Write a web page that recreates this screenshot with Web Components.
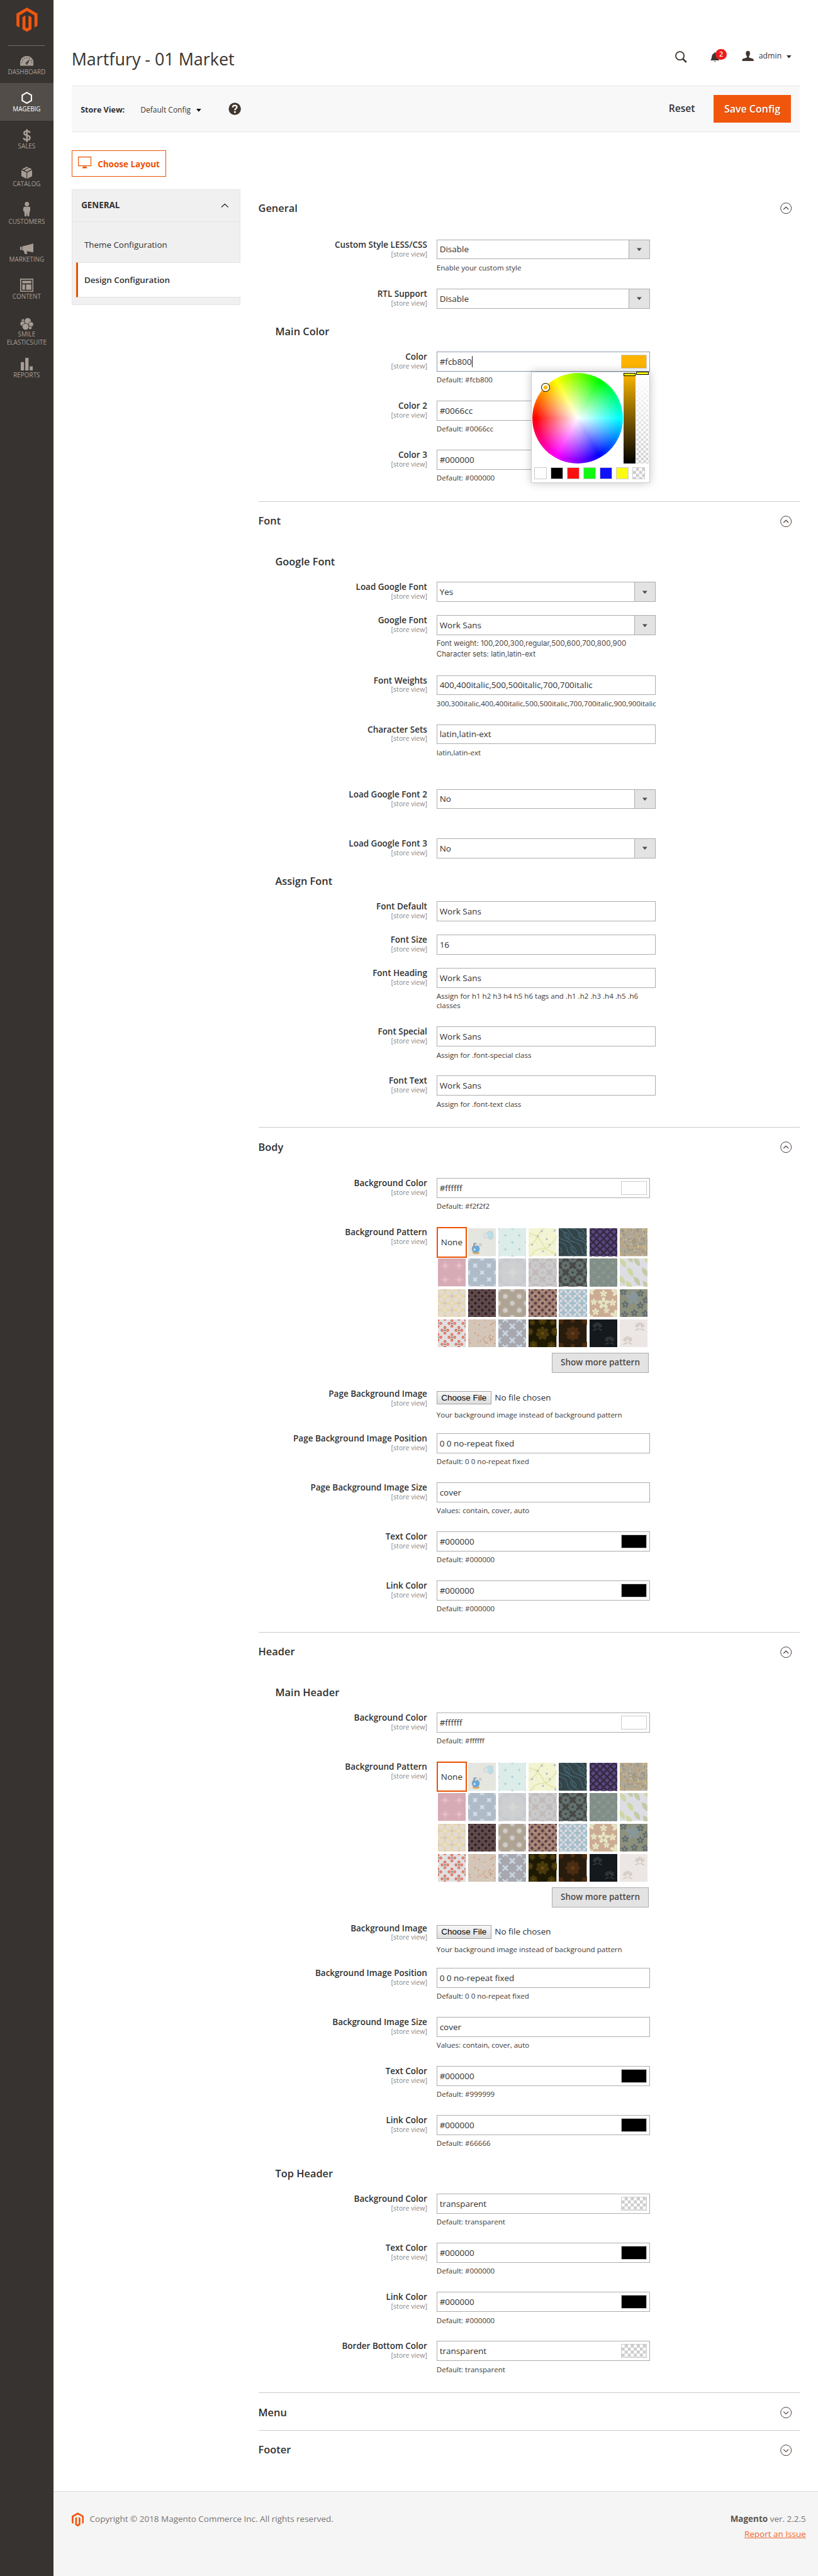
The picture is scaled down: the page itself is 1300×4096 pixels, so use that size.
<!DOCTYPE html>
<html lang="en">
<head>
<meta charset="utf-8">
<title>Martfury - 01 Market</title>
<style>
html{background:#fff}
body{margin:0;zoom:.96368;font-family:"Open Sans","Noto Sans",sans-serif;color:#303030;overflow:hidden}
</style>
</head>
<body>
<mb-admin></mb-admin>
<script>
const define = (name, css, html) => customElements.define(name, class extends HTMLElement {
  constructor() { super(); this.attachShadow({ mode: 'open' }); }
  connectedCallback() {
    const a = n => this.getAttribute(n) || '';
    this.shadowRoot.innerHTML = `<style>*{box-sizing:border-box}${css}</style>` + (typeof html === 'function' ? html(a) : html);
  }
});

/* ---------- icons ---------- */
const ICONS = {
  magento: '<svg viewBox="1.6 0 20.8 24"><path d="M12 24l-4.455-2.572v-12l2.97-1.715v12.001l1.485.902 1.485-.902V7.713l2.971 1.715v12L12 24zM22.391 6v12l-2.969 1.714V7.713L12 3.43 4.574 7.713v12.001L1.609 18V6L12 0l10.391 6z"/></svg>',
  dashboard: '<svg viewBox="0 0 22 16"><path d="M0 16V11A11 11 0 0 1 22 11V16Z"/><g fill="#373330"><circle cx="3" cy="11" r=".8"/><circle cx="4.2" cy="7" r=".8"/><circle cx="7" cy="4" r=".8"/><circle cx="11" cy="2.8" r=".8"/><circle cx="15" cy="4" r=".8"/><circle cx="18.6" cy="7.4" r=".8"/><circle cx="19.3" cy="11" r=".8"/><path d="M16 5.5L12.8 12.6A2 2 0 1 1 9.6 10.6Z"/></g><circle cx="11" cy="12" r=".8"/></svg>',
  magebig: '<svg viewBox="0 0 20 22"><path d="M10 2.2L17.6 6.5V15.5L10 19.8L2.4 15.5V6.5Z" fill="none" stroke="currentColor" stroke-width="2.2"/></svg>',
  sales: '<svg viewBox="0 0 14 22"><path d="M12 6.2C11.6 4.2 9.8 3.6 7 3.6C4 3.6 2.4 4.8 2.4 7C2.4 12 12 9.4 12 14.6C12 17 10 18.2 7 18.2C3.8 18.2 1.8 17 1.6 14.6M7 .5V21.5" fill="none" stroke="currentColor" stroke-width="2.7"/></svg>',
  catalog: '<svg viewBox="0 0 18 20"><path d="M0 5.6L8.4 9.6V20L0 15.6ZM18 5.6L9.6 9.6V20L18 15.6ZM9 0L11.6 1.2L3.4 5.4L.9 4.2ZM13 1.9L17.1 4.2L9 8.3L4.9 6.2Z"/></svg>',
  customers: '<svg viewBox="0 0 12 24"><circle cx="6" cy="3.6" r="3.6"/><path d="M2.4 8H9.6Q12 8 12 11V15.6H10.4L9.6 24H6.8L6 18L5.2 24H2.4L1.6 15.6H0V11Q0 8 2.4 8Z"/></svg>',
  marketing: '<svg viewBox="0 0 22 18"><path d="M0 5.5H2.6V11H0ZM3.6 5L22 .3V14.8L11 12.6L11.6 18H8L5.8 11.6H3.6Z"/></svg>',
  content: '<svg viewBox="0 0 22 22"><path fill-rule="evenodd" d="M0 0H22V22H0ZM1.8 1.8V20.2H20.2V1.8ZM3.6 3.6H18.4V7.8H3.6ZM3.6 9.6H8V18.4H3.6ZM9.8 9.6H18.4V18.4H9.8Z"/></svg>',
  smile: '<svg viewBox="0 0 22 20"><g stroke="#373330" stroke-width=".8"><circle cx="12.6" cy="5.2" r="5.4"/><circle cx="4.6" cy="4.2" r="2.6"/><circle cx="4" cy="9.4" r="4.1"/><circle cx="18" cy="10.6" r="4.1"/><circle cx="16.6" cy="16.4" r="2.7"/><circle cx="9" cy="14.6" r="5.4"/></g></svg>',
  reports: '<svg viewBox="0 0 20 21"><path d="M0 7H5.4V21H0ZM7.4 0H12.8V21H7.4ZM14.8 14H20V21H14.8Z"/></svg>',
  search: '<svg viewBox="0 0 21 21"><circle cx="8.8" cy="8.4" r="7.2" fill="none" stroke="currentColor" stroke-width="2"/><path d="M13.8 13.6L20 19.6" stroke="currentColor" stroke-width="2.8"/></svg>',
  bell: '<svg viewBox="0 0 16 18"><path d="M0 14.4C2.4 12 2 9 2.8 6C3.4 3.4 5 2.2 6.6 1.8V.6H9.4V1.8C11 2.2 12.6 3.4 13.2 6C14 9 13.6 12 16 14.4ZM6.4 15.8H9.6Q8 18.4 6.4 15.8Z"/></svg>',
  user: '<svg viewBox="0 0 20 18"><path d="M10 0C13 0 13.8 2 13.6 4.8C13.5 7 12.6 8.6 11.8 9.6V11.4C14 12.8 19.4 13 20 15.4V18H0V15.4C.6 13 6 12.8 8.2 11.4V9.6C7.4 8.6 6.5 7 6.4 4.8C6.2 2 7 0 10 0Z"/></svg>',
  monitor: '<svg viewBox="0 0 22 20"><path d="M.7 .7H21.3V15.2H.7Z" fill="none" stroke="currentColor" stroke-width="1.2"/><path d="M8.2 16.4H13.8V18H15V19.3H7V18H8.2Z"/></svg>',
  help: '<svg viewBox="0 0 22 22"><circle cx="11" cy="11" r="10.6"/><path d="M7.4 8.4C7.6 3.8 14.6 4 14.6 8C14.6 10.6 11.2 10.4 11.2 13.2" fill="none" stroke="#fff" stroke-width="2.6"/><circle cx="11.2" cy="16.6" r="1.6" fill="#fff"/></svg>',
  caret: '<svg viewBox="0 0 14 8"><path d="M1 7L7 1.4L13 7" fill="none" stroke="currentColor" stroke-width="1.5"/></svg>',
  up: '<svg viewBox="0 0 19 19"><circle cx="9.5" cy="9.5" r="8.8" fill="none" stroke="currentColor"/><path d="M5.4 11.4L9.5 7.4L13.6 11.4" fill="none" stroke="currentColor" stroke-width="1.2"/></svg>',
  down: '<svg viewBox="0 0 19 19"><circle cx="9.5" cy="9.5" r="8.8" fill="none" stroke="currentColor"/><path d="M5.4 8L9.5 12L13.6 8" fill="none" stroke="currentColor" stroke-width="1.2"/></svg>',
  tri: '<svg viewBox="0 0 8 5"><path d="M0 0H8L4 5Z"/></svg>'
};
define('mb-icon', ':host{display:block;flex:none}svg{display:block;width:100%;height:100%;fill:currentColor}', a => ICONS[a('name')]);

/* ---------- sidebar ---------- */
define('mb-nav-item', `
:host{display:flex;flex-direction:column;align-items:center;height:62px;color:#a79d95;flex:none}
:host([active]){background:#524d49;color:#fff}
:host([tall]){height:67.5px}
.i{height:36px;padding-top:4px;display:flex;align-items:center}
span{font-size:10.3px;line-height:13px;text-align:center;text-transform:uppercase}`,
a => `<div class="i"><mb-icon name="${a('icon')}" style="width:${a('w')}px;height:${a('h')}px;margin-top:${a('dy') || 6}px"></mb-icon></div><span><slot></slot></span>`);

define('mb-sidebar', `
:host{display:flex;flex-direction:column;width:88px;background:#373330;flex:none}
.logo{height:75px;padding:12.5px 0 0 27px;color:#f1570f}
hr{width:60px;height:1px;border:0;background:#736963;margin:0 auto;flex:none}
nav{display:flex;flex-direction:column}`, `
<div class="logo"><mb-icon name="magento" style="width:35px;height:40px"></mb-icon></div><hr>
<nav>
<mb-nav-item icon="dashboard" w="22" h="16" dy="9" style="height:61px">Dashboard</mb-nav-item>
<mb-nav-item icon="magebig" w="20" h="22" dy="8" active>Magebig</mb-nav-item>
<mb-nav-item icon="sales" w="14" h="22" dy="9">Sales</mb-nav-item>
<mb-nav-item icon="catalog" w="18" h="20" dy="9">Catalog</mb-nav-item>
<mb-nav-item icon="customers" w="12" h="24" dy="4">Customers</mb-nav-item>
<mb-nav-item icon="marketing" w="22" h="18" dy="11">Marketing</mb-nav-item>
<mb-nav-item icon="content" w="22" h="22" dy="7">Content</mb-nav-item>
<mb-nav-item icon="smile" w="22" h="21" dy="11" tall>Smile<br>Elasticsuite</mb-nav-item>
<mb-nav-item icon="reports" w="20" h="21" dy="9">Reports</mb-nav-item>
</nav>`);

/* ---------- header ---------- */
define('mb-header', `
:host{display:flex;height:141px;padding:0 44px 0 30px;align-items:flex-start;color:#41362f}
h1{margin:78px auto 0 0;font-weight:400;font-size:27.9px;line-height:40px;color:#373330}
.s{margin:84px 38px 0 0}.b{position:relative;margin:86px 37px 0 0}
.n{position:absolute;left:9px;top:-5px;width:18px;height:18px;border-radius:50%;background:#eb1c1c;color:#fff;font-size:11px;font-weight:600;line-height:18px;text-align:center}
.u{display:flex;align-items:center;margin-top:83px;font-size:12.8px;line-height:19px;gap:8px}`, `
<h1>Martfury - 01 Market</h1>
<mb-icon class="s" name="search" style="width:21px;height:20px"></mb-icon>
<div class="b"><mb-icon name="bell" style="width:15px;height:17px"></mb-icon><span class="n">2</span></div>
<div class="u"><mb-icon name="user" style="width:20px;height:17px"></mb-icon><span>admin</span><mb-icon name="tri" style="width:8px;height:5px;color:#303030;margin-top:3px"></mb-icon></div>`);

define('mb-toolbar', `
:host{display:flex;align-items:center;height:77px;margin:0 30px;padding:0 15px;background:#f8f8f8;border:solid #e3e3e3;border-width:1px 0;color:#303030}
b{font-size:13px;font-weight:700;line-height:20px;margin:4px 26px 0 0}
.d{font-size:12.5px;line-height:20px;color:#41362f;margin:4px 9px 0 0}
.h{width:21px;height:21px;margin:0 auto 0 45px;color:#41362f}
.r{font-size:16.2px;font-weight:600;line-height:22px;margin-right:31px;margin-top:-1px}
button{all:unset;box-sizing:border-box;width:127px;height:45px;background:#f1570c;color:#fff;font:600 16.6px/44px "Open Sans",sans-serif;text-align:center;text-shadow:1px 1px 0 rgba(0,0,0,.25)}`, `
<b>Store View:</b><span class="d">Default Config</span><mb-icon name="tri" style="width:8px;height:5px;color:#000;margin-top:5px"></mb-icon>
<mb-icon class="h" name="help"></mb-icon><span class="r">Reset</span><button>Save Config</button>`);

define('mb-layout-button', `
:host{display:flex;align-items:center;width:156px;height:44px;border:1px solid #eb5202;color:#eb5202;padding:0 10px;font-size:14px;font-weight:700;line-height:20px}
mb-icon{width:22px;height:20px;margin:-3px 10px 0 0}span{margin-top:4px;white-space:nowrap}`,
`<mb-icon name="monitor"></mb-icon><span><slot></slot></span>`);

define('mb-config-nav', `
:host{display:block;width:278px;height:191px;background:#f0f0f0;border:1px solid #e3e3e3;font-size:13.9px;line-height:20px}
.h{display:flex;justify-content:space-between;align-items:center;height:53px;border-bottom:1px solid #e3e3e3;padding:0 18px 0 15px;font-weight:700}
.l{height:67px;padding:28px 0 0 20px}
.a{height:58px;padding:18px 0 0 10px;margin:0 -1px 0 7px;background:#fff;border:solid #e3e3e3;border-width:1px 0;border-left:3.2px solid #eb5202;font-weight:600}`, `
<div class="h"><span>GENERAL</span><mb-icon name="caret" style="width:13px;height:8px"></mb-icon></div>
<div class="l">Theme Configuration</div><div class="a">Design Configuration</div>`);

/* ---------- form ---------- */
define('mb-section', `
:host{display:block;border-top:1px solid #ccc;padding-bottom:4px}
:host([first]){border-color:transparent}
:host([closed]){height:62px;padding:0}
.h{display:flex;justify-content:space-between;height:83px;padding:21px 13.5px 0 0;font-size:17px;font-weight:600;line-height:20px}
mb-icon{width:19px;height:19px;margin-top:1.5px;color:#41362f}`,
a => `<div class="h"><span>${a('label')}</span><mb-icon name="${a('icon') || 'up'}"></mb-icon></div><slot></slot>`);

define('mb-subhead', ':host{display:block;height:49px;padding:5.5px 0 0 28px;font-size:17px;font-weight:600;line-height:20px}', '<slot></slot>');

const CHECK = 'background:conic-gradient(#ccc 25%,#fff 0 50%,#ccc 0 75%,#fff 0) 0 0/10px 10px';
define('mb-field', `
:host{display:flex;align-items:flex-start;--w:351.5px}
:host([wide]){--w:361px}
.l{width:278.5px;text-align:right;margin-right:15.5px;font-size:14px;font-weight:600;line-height:18px;padding-top:0;white-space:nowrap;flex:none}
.l small{display:block;font-size:11px;font-weight:400;line-height:14px;color:#8c8783;margin-top:-.5px}
.c{width:var(--w);flex:none}
.n{font-size:12px;line-height:16px;padding-top:5.5px;color:#41362f}
.n.w{font-family:Inter,sans-serif;line-height:17px;color:#514943}`,
a => `<div class="l">${a('label')}<small>[store view]</small></div>
<div class="c"><slot></slot>${a('note') ? `<div class="n ${a('nf')}">${a('note')}</div>` : ''}</div>`);

define('mb-input', `
:host{display:flex;align-items:center;height:33px;border:1px solid #adadad;padding:0 4px;font-size:14px;line-height:20px;background:#fff}
:host([focus]){border-color:#8a9bb0}
.cur{width:1px;height:19px;background:#222}
span{margin-top:1px}
i{width:42px;height:23px;border:1px solid #ccc;margin-left:auto}`,
a => `<span>${a('value')}</span>${a('focus') ? '<div class="cur"></div>' : ''}${a('color') ? `<i style="${a('color') === 'check' ? CHECK : 'background:' + a('color')}"></i>` : ''}`);

define('mb-select', `
:host{display:flex;height:33px;border:1px solid #adadad;font-size:14px;line-height:20px;background:#fff}
span{flex:1;padding:6px 4px}
div{width:34px;background:#e3e3e3;border-left:1px solid #adadad;display:flex;align-items:center;justify-content:center;color:#514943}
mb-icon{width:8px;height:6px;margin-top:1px}`,
a => `<span>${a('value')}</span><div><mb-icon name="tri"></mb-icon></div>`);

define('mb-file', `
:host{display:flex;align-items:center;height:30px;gap:6px;font-size:14px;line-height:20px}
button{all:unset;box-sizing:border-box;width:90px;height:22px;border:1px solid #a3a3a3;background:linear-gradient(#f8f8f8,#ddd);color:#000;text-align:center;font:14px/20px "Liberation Sans",sans-serif}`,
`<button>Choose File</button><span>No file chosen</span>`);

/* ---------- background pattern swatches ---------- */
const cir = (x, y, r, c) => `<circle cx="${x}" cy="${y}" r="${r}" fill="${c}"/>`;
const ell = (x, y, a, b, c, t = 0) => `<ellipse cx="${x}" cy="${y}" rx="${a}" ry="${b}" fill="${c}" transform="rotate(${t} ${x} ${y})"/>`;
const star = (x, y, r, c) => { let d = ''; for (let i = 0; i < 16; i++) { const q = i * Math.PI / 8, k = i % 2 ? r * .3 : i % 4 ? r * .58 : r; d += `${(x + Math.sin(q) * k).toFixed(1)},${(y - Math.cos(q) * k).toFixed(1)} `; } return `<polygon points="${d}" fill="${c}"/>`; };
const flower = (x, y, r, c, m, n = 6) => { let s = ''; for (let i = 0; i < n; i++) s += ell(x, +(y - r * .6).toFixed(1), r * .3, r * .42, c, 0).replace(/rotate\([^)]*\)/, `rotate(${i * 360 / n} ${x} ${y})`); return s + cir(x, y, r * .22, m); };
/* thin sprig: leaves fanning upward over a small bud */
const sprig = (x, y, c) => [-75, -50, -25, 0, 25, 50, 75].map((t, i) => `<ellipse cx="${x}" cy="${y - 6}" rx="1" ry="${i % 2 ? 3.2 : 2.4}" fill="${c}" transform="rotate(${t} ${x} ${y})"/>`).join('') + `<circle cx="${x}" cy="${y}" r="3.2" fill="none" stroke="${c}" stroke-width="1.3" stroke-dasharray="1.5 .8"/>` + ell(x - 5, y + 4, 3, .9, c, -25) + ell(x + 5, y + 4, 3, .9, c, 25);
const lattice = (p, fn, ox = 0, oy = 0) => { let s = ''; for (let j = -1; j * p / 2 <= 52; j++) for (let i = -1; i * p <= 58; i++) s += fn(ox + i * p + (j % 2 ? p / 2 : 0), oy + j * p / 2); return s; };
let seed = 7; const rnd = () => (seed = (seed * 16807) % 2147483647) / 2147483647;
const scatter = (n, fn) => { let s = ''; for (let i = 0; i < n; i++) s += fn(+(rnd() * 46).toFixed(1), +(rnd() * 46).toFixed(1), Math.round(rnd() * 180)); return s; };
const TILES = [
  ['#e5e6e1', scatter(190, (x, y, t) => cir(x, y, .55, t > 90 ? '#f2efc4' : '#d9dfe2')) + cir(29.5, 12, 4.6, '#c5cad2') + cir(36, 9.5, 5.2, '#bcc7d2') + cir(37, 14, 4.4, '#b9c6d2') + cir(29.5, 12, 3.8, '#dee2e2') + cir(36, 9.5, 4.2, '#b9dfe6') + cir(37, 14, 3.4, '#b9dfe6') + ell(13, 40.5, 6, 2.4, '#dfae68') + cir(12.5, 34, 6.6, '#8a9fb8') + cir(13, 34.5, 5.2, '#64aade') + cir(11.5, 27, 3.2, '#98a0ac') + cir(13, 27.4, 1.8, '#cfe0ea') + cir(20, 27, 2.6, '#c9ccd0') + cir(10.5, 35, 1.7, '#d7eaf5')],
  ['#dcece9', lattice(23, (x, y) => star(x, y, 3.3, '#a4c9d7'), 0, .2)],
  ['#f3f4d4', '<path d="M-4 30Q10 26 16 12T38 -6M2 50Q8 34 22 34T50 8M-2 8Q16 10 22 24T48 42" fill="none" stroke="#dde19c" stroke-width="2.4" stroke-dasharray="2 1.3"/>' + scatter(30, (x, y) => cir(x, y, .9, '#e1e5a6')) + [[15, 13], [6, 27], [35, 27], [43, 4], [22, 5], [24, 38], [44, 44], [30, 18]].map(p => cir(p[0], p[1], 1.8, '#b9bfd0')).join('')],
  ['#34454a', '<g fill="none" stroke="#476873" stroke-width="1.4">' + [-24, 0, 24].map(o => `<path d="M${o - 4} 0C${o + 16} 2 ${o + 6} 18 ${o + 26} 23S${o + 30} 42 ${o + 50} 46M${o + 6} -2C${o + 22} 0 ${o + 16} 16 ${o + 34} 20S${o + 42} 40 ${o + 56} 44"/><ellipse cx="${o + 13}" cy="12" rx="3.4" ry="6" transform="rotate(-40 ${o + 13} 12)"/><ellipse cx="${o + 24}" cy="35" rx="3.4" ry="6" transform="rotate(-40 ${o + 24} 35)"/>`).join('') + '</g>'],
  ['#312b42', lattice(11.5, (x, y) => `<path d="M${x} ${y - 3.9}L${x + 3.9} ${y}L${x} ${y + 3.9}L${x - 3.9} ${y}Z" fill="#5d447f"/>`)],
  ['#b0a691', scatter(110, (x, y, t) => ell(x, y, 2, 1, ['#d3ac6c', '#8e9394', '#cdbfa6', '#a1937a'][t % 4], t)) + star(23, 23, 8, '#8f918c') + star(23, 23, 4, '#c49d5a')],
  ['#d7abb6', [[12, 12], [35, 12], [12, 35], [35, 35]].map(p => star(p[0], p[1], 8.5, '#e5bfc6')).join('')],
  ['#b0bbc8', lattice(23, (x, y) => `<path d="M${x - 4.5} ${y - 4.5}Q${x} ${y - 1} ${x + 4.5} ${y - 4.5}Q${x + 1} ${y} ${x + 4.5} ${y + 4.5}Q${x} ${y + 1} ${x - 4.5} ${y + 4.5}Q${x - 1} ${y} ${x - 4.5} ${y - 4.5}Z" fill="#cddde9"/>`, 0, .2)],
  ['#c7cad0', flower(23, 23, 22, '#cdcfd1', '#d4d6d4', 8) + star(23, 23, 14, '#d6d8d5') + [[0, 0], [46, 0], [0, 46], [46, 46]].map(p => cir(p[0], p[1], 7, '#cfd1d2')).join('')],
  ['#c2bab7', lattice(23, (x, y) => flower(x, y, 8, '#cacacc', '#c2bab7', 8))],
  ['#484946', lattice(23, (x, y) => flower(x, y, 7.5, '#637170', '#3c3e3b', 8)) + scatter(60, (x, y) => cir(x, y, .6, '#5c5e5a'))],
  ['#66736e', lattice(15.3, (x, y) => flower(x, y, 7, '#84918a', '#9ba69e', 8))],
  ['#dcdee3', [[5, 7], [28, 5], [17, 22], [41, 22], [3, 35], [28, 37], [44, 1], [16, -1], [15, 44], [43, 44]].map((p, i) => `<path d="M${p[0] - 5} ${p[1] - 7}Q${p[0] + 7} ${p[1] - 5} ${p[0] + 5} ${p[1] + 8}Q${p[0] - 5} ${p[1] + 5} ${p[0] - 5} ${p[1] - 7}Z" fill="${i % 2 ? '#c4c9a8' : '#ced6a1'}"/>`).join('')],
  ['#e2dbd7', lattice(23, (x, y) => flower(x, y, 9, '#e6d8ae', '#ece2c6', 4)) + lattice(23, (x, y) => star(x, y, 5.5, '#d6c3b8'), 11.5, 0)],
  ['#634a4d', lattice(11.5, (x, y) => cir(x, y, 2.3, '#2d2626'), .5, 0) + lattice(11.5, (x, y) => cir(x, y, .7, '#4b3538'), 6, 0)],
  ['#afa393', lattice(23, (x, y) => cir(x, y, 5, '#bcb3a8') + cir(x, y, 3.4, '#cfccca'), 0, .2)],
  ['#9d7e6f', lattice(23, (x, y) => cir(x, y, 6.5, '#ae897a')) + lattice(11.5, (x, y) => cir(x, y, 2.3, '#583f48'))],
  ['#dbd7dd', lattice(15.3, (x, y) => flower(x, y, 6, '#9fbecb', '#bccfd8', 4) + cir(x, y, 2.6, '#9fbecb'))],
  ['#cbac93', flower(23, 23, 9.5, '#e5e5c4', '#cbac93', 5) + [[7, 21, 5.5], [23, 7, 6], [38, 22, 6], [10, 37, 6], [28, 35, 5], [44, 4, 8], [1, 2, 8], [43, 43, 9], [0, 46, 6]].map(p => flower(p[0], p[1], p[2], '#e5e5c4', '#e5e5c4', 5)).join('')],
  ['#8d917c', flower(22, 14, 12, '#88989c', '#87989f', 5) + [[9, 25], [34, 7], [34, 27], [8, 42], [24, 39], [43, 18], [42, 40], [6, 4]].map(p => flower(p[0], p[1], 6, '#616d72', '#8d917c', 5)).join('')],
  ['#e0dfe0', lattice(23, (x, y) => [[0, -4.6], [4.6, 0], [0, 4.6], [-4.6, 0]].map(o => cir(x + o[0], y + o[1], 2.4, '#dc6654') + cir(x + o[0], y + o[1], 1, '#e9b49f')).join('') + cir(x, y, 1.4, '#6e8377'), 0, 6.5)],
  ['#d3c5b7', scatter(50, (x, y, t) => ell(x, y, 1.5, 1, ['#cf9a79', '#dfd2c2', '#c98f6d'][t % 3], t) + ell(x, y, .7, .4, '#ddc0a8', t))],
  ['#c6d5e1', lattice(23, (x, y) => flower(x, y, 8.6, '#a8a7ae', '#b4b6bd', 8) + cir(x, y, 4, '#a8a7ae'))],
  ['#1d1903', [[23, 23, 11], [23, 2, 7], [2, 20, 6], [44, 20, 7], [8, 42, 7], [38, 43, 7], [6, 5, 5], [40, 5, 5]].map(p => flower(p[0], p[1], p[2], '#4a390b', '#6a5210', 7)).join('')],
  ['#281c0d', [[23, 23, 12], [0, 0, 9], [46, 0, 9], [0, 46, 9], [46, 46, 9], [23, 2, 4], [23, 44, 4]].map(p => flower(p[0], p[1], p[2], '#4c2d12', '#6a3f18', 8)).join('')],
  ['#13191d', sprig(13, 13, '#3a3e41') + sprig(33, 36, '#3a3e41')],
  ['#ece7e4', sprig(33, 13, '#cfc4bd') + sprig(13, 36, '#cfc4bd') + scatter(30, (x, y) => cir(x, y, .5, '#ddd4cf'))]
];
define('mb-patterns', `
:host{display:flex;flex-direction:column}
.g{display:grid;grid-template-columns:repeat(7,50px);grid-auto-rows:50px}
.g>*{width:46px;height:46px;margin:2px;display:block;overflow:hidden}
.g>.none{width:50px;height:50px;margin:0;border:2.2px solid #eb5202;font-size:14px;line-height:46px;text-align:center;color:#303030}
button{all:unset;box-sizing:border-box;align-self:flex-end;margin:7px 1.5px 0 0;width:160px;height:33px;border:1px solid #adadad;background:#e3e3e3;color:#514943;font:600 14px/31px "Open Sans",sans-serif;text-align:center}`,
() => `<div class="g"><div class="none">None</div>${TILES.map(([bg, art]) => `<svg viewBox="0 0 46 46"><rect width="46" height="46" fill="${bg}"/>${art}</svg>`).join('')}</div><button>Show more pattern</button>`);

/* ---------- colour picker popup ---------- */
define('mb-picker', `
:host{position:absolute;right:0;top:33px;z-index:5;width:196px;height:184px;background:#fff;border:1px solid #ccc;box-shadow:0 0 14px rgba(0,0,0,.22);display:block;padding:1px 1px 0}
.t{display:flex;gap:1px}
.w{width:150px;height:150px;border-radius:50%;background:radial-gradient(circle closest-side,#fff,rgba(255,255,255,0) 92%),conic-gradient(from 270deg,red,#ff0,#0f0,#0ff,#00f,#f0f,red);position:relative}
.w i{position:absolute;left:15px;top:17px;width:14px;height:14px;border:1px solid #000;border-radius:50%;background:#fcb800;box-shadow:inset 0 0 0 3px #fff}
.s{width:20px;height:150px;position:relative}
.v{background:linear-gradient(#fcb800,#000)}
.a{background:linear-gradient(#fff,rgba(255,255,255,0)),conic-gradient(#ccc 25%,#fff 0 50%,#ccc 0 75%,#fff 0) 0 0/8px 8px}
.s i{position:absolute;left:0;top:0;width:20px;height:5px;border:1px solid #000;background:#ff0}
.a i{top:-2px}
.p{display:flex;gap:7px;padding:6px 4px}
.p i{width:20px;height:20px;border:1px solid #ccc}`, `
<div class="t"><div class="w"><i></i></div><div class="s v"><i></i></div><div class="s a"><i></i></div></div>
<div class="p">${['#fff', '#000', '#f91111', '#11f911', '#1111f9', '#fbfb11'].map(c => `<i style="background:${c}"></i>`).join('')}<i style="${CHECK}"></i></div>`);

/* ---------- page ---------- */
const field = (label, h, inner, note = '', x = '') => `<mb-field label="${label}" style="height:${h}px" note="${note}" ${x}>${inner}</mb-field>`;
const inp = (v, c = '') => `<mb-input value="${v}" color="${c}"></mb-input>`;
const sel = v => `<mb-select value="${v}"></mb-select>`;
const bgGroup = (p, bgDef, txt, link) =>
  field('Background Color', 81, inp('#ffffff', '#fff'), bgDef) +
  field('Background Pattern', 266, '<mb-patterns></mb-patterns>') +
  field(p + 'Background Image', 74, '<mb-file></mb-file>', 'Your background image instead of background pattern') +
  field(p + 'Background Image Position', 81, inp('0 0 no-repeat fixed'), 'Default: 0 0 no-repeat fixed') +
  field(p + 'Background Image Size', 81, inp('cover'), 'Values: contain, cover, auto') +
  field('Text Color', 81, inp('#000000', '#000'), 'Default: ' + txt) +
  field('Link Color', 81, inp('#000000', '#000'), 'Default: ' + link);

define('mb-footer', `
:host{display:flex;justify-content:space-between;height:140px;background:#f5f5f5;border-top:1px solid #dcdcdc;padding:34px 20px 0 30px;font-size:14px;line-height:24px;color:#777370}
.l{display:flex;align-items:flex-start;gap:10px}.r{text-align:right}
b{font-weight:700;color:#5a5450}a{color:#ef672f;text-decoration:underline}mb-icon{color:#f1570f;margin-top:1px}`, `
<div class="l"><mb-icon name="magento" style="width:20px;height:23px"></mb-icon><span>Copyright © 2018 Magento Commerce Inc. All rights reserved.</span></div>
<div class="r"><b>Magento</b> ver. 2.2.5<br><a>Report an Issue</a></div>`);

define('mb-admin', `
:host{display:flex;width:1349px;height:4250px;background:#fff}
main{flex:1;display:flex;flex-direction:column;min-width:0}
.body{display:flex;flex:1;padding:0 30px}
aside{width:308px;padding-top:30px;flex:none}
mb-config-nav{margin-top:20px}
.form{flex:1;padding-top:93px}
.pick{position:relative}`, `
<mb-sidebar></mb-sidebar>
<main>
<mb-header></mb-header><mb-toolbar></mb-toolbar>
<div class="body">
<aside><mb-layout-button>Choose Layout</mb-layout-button><mb-config-nav></mb-config-nav></aside>
<div class="form">
<mb-section label="General" first>
${field('Custom Style LESS/CSS', 81, sel('Disable'), 'Enable your custom style')}
${field('RTL Support', 55, sel('Disable'))}
<mb-subhead>Main Color</mb-subhead>
${field('Color', 81, '<div class="pick"><mb-input value="#fcb800" color="#fcb400" focus="1"></mb-input><mb-picker></mb-picker></div>', 'Default: #fcb800')}
${field('Color 2', 81, inp('#0066cc', '#06c'), 'Default: #0066cc')}
${field('Color 3', 81, inp('#000000', '#000'), 'Default: #000000')}
</mb-section>
<mb-section label="Font">
<mb-subhead>Google Font</mb-subhead>
${field('Load Google Font', 55, sel('Yes'), '', 'wide')}
${field('Google Font', 99, sel('Work Sans'), 'Font weight: 100,200,300,regular,500,600,700,800,900<br>Character sets: latin,latin-ext', 'wide nf="w"')}
${field('Font Weights', 81, inp('400,400italic,500,500italic,700,700italic'), '300,300italic,400,400italic,500,500italic,700,700italic,900,900italic', 'wide')}
${field('Character Sets', 107, inp('latin,latin-ext'), 'latin,latin-ext', 'wide')}
${field('Load Google Font 2', 81, sel('No'), '', 'wide')}
${field('Load Google Font 3', 55, sel('No'), '', 'wide')}
<mb-subhead>Assign Font</mb-subhead>
${field('Font Default', 55, inp('Work Sans'), '', 'wide')}
${field('Font Size', 55, inp('16'), '', 'wide')}
${field('Font Heading', 97, inp('Work Sans'), 'Assign for h1 h2 h3 h4 h5 h6 tags and .h1 .h2 .h3 .h4 .h5 .h6 classes', 'wide')}
${field('Font Special', 81, inp('Work Sans'), 'Assign for .font-special class', 'wide')}
${field('Font Text', 81, inp('Work Sans'), 'Assign for .font-text class', 'wide')}
</mb-section>
<mb-section label="Body">${bgGroup('Page ', 'Default: #f2f2f2', '#000000', '#000000')}</mb-section>
<mb-section label="Header">
<mb-subhead>Main Header</mb-subhead>
${bgGroup('', 'Default: #ffffff', '#999999', '#66666')}
<mb-subhead>Top Header</mb-subhead>
${field('Background Color', 81, inp('transparent', 'check'), 'Default: transparent')}
${field('Text Color', 81, inp('#000000', '#000'), 'Default: #000000')}
${field('Link Color', 81, inp('#000000', '#000'), 'Default: #000000')}
${field('Border Bottom Color', 81, inp('transparent', 'check'), 'Default: transparent')}
</mb-section>
<mb-section label="Menu" icon="down" closed></mb-section>
<mb-section label="Footer" icon="down" closed></mb-section>
</div></div>
<mb-footer></mb-footer>
</main>`);
</script>
</body>
</html>
